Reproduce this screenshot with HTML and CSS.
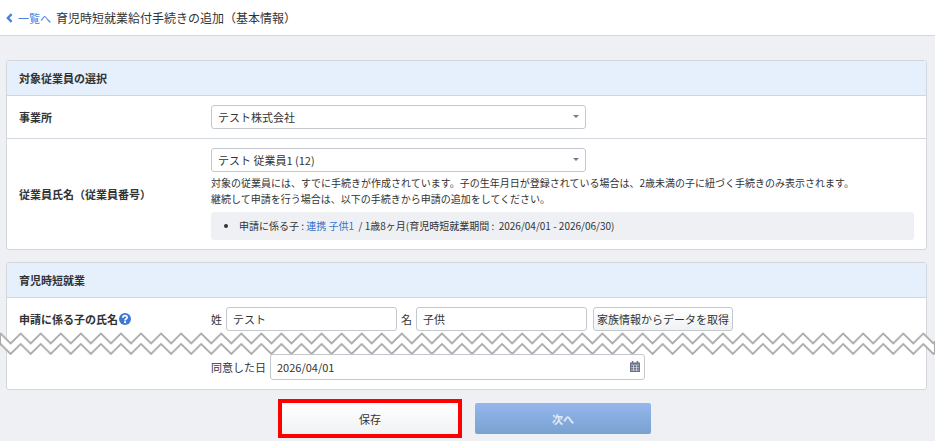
FILE: index.html
```html
<!DOCTYPE html>
<html lang="ja">
<head>
  <meta charset="UTF-8">
  <meta name="viewport" content="width=device-width, initial-scale=1">
  <title>育児時短就業給付手続きの追加（基本情報）</title>
  <link rel="stylesheet" href="styles.css">
</head>
<body>

  <header class="page-header">
    <a href="#" class="back-link">
      <svg width="7" height="10" viewBox="0 0 7 10"><path d="M5.6 1.2 L1.9 5 L5.6 8.8" fill="none" stroke="currentColor" stroke-width="2.4"/></svg>
      一覧へ
    </a>
    <h1>育児時短就業給付手続きの追加（基本情報）</h1>
  </header>

  <form class="content">
    <section class="panel">
      <h2>対象従業員の選択</h2>
      <div class="row">
        <label class="row-label" for="office">事業所</label>
        <div class="row-body">
          <div class="select">
            <select id="office"><option>テスト株式会社</option></select>
          </div>
        </div>
      </div>
      <div class="row">
        <label class="row-label" for="employee">従業員氏名（従業員番号）</label>
        <div class="row-body">
          <div class="select">
            <select id="employee"><option>テスト 従業員1 (12)</option></select>
          </div>
          <p class="help-text">対象の従業員には、すでに手続きが作成されています。子の生年月日が登録されている場合は、2歳未満の子に紐づく手続きのみ表示されます。<br>継続して申請を行う場合は、以下の手続きから申請の追加をしてください。</p>
          <ul class="procedures">
            <li>申請に係る子 : <a href="#">連携 子供1</a>&nbsp; / 1歳8ヶ月(育児時短就業期間 :&nbsp; 2026/04/01 - 2026/06/30)</li>
          </ul>
        </div>
      </div>
    </section>

    <section class="panel">
      <h2>育児時短就業</h2>
      <div class="row row-cut-bottom">
        <div class="row-label">
          申請に係る子の氏名
          <svg class="help-icon" width="12" height="12" viewBox="0 0 12 12">
            <circle cx="6" cy="6" r="6" fill="#3a78d4"/>
            <path d="M3.9 4.7 C3.9 2 8.2 2.1 8.2 4.5 C8.2 5.9 6.1 5.8 6.1 7.4" fill="none" stroke="#fff" stroke-width="1.8"/>
            <rect x="5.1" y="8.2" width="2" height="1.9" fill="#fff"/>
          </svg>
        </div>
        <div class="row-body fields">
          <label for="lastName">姓</label>
          <input type="text" id="lastName" class="name-input" value="テスト">
          <label for="firstName">名</label>
          <input type="text" id="firstName" class="name-input" value="子供">
          <button type="button" class="small-btn">家族情報からデータを取得</button>
        </div>
      </div>

      <!-- 途中の項目を省略 -->
      <div class="omission">
        <svg width="100%" height="24">
          <defs>
            <pattern id="zigzag" x="0.6" width="20.06" height="24" patternUnits="userSpaceOnUse">
              <path d="M-10.03 11.5 L0 1.5 L10.03 11.5 L20.06 1.5 L30.09 11.5 V22 L20.06 12 L10.03 22 L0 12 L-10.03 22 Z" fill="#fff" stroke="#aaa" stroke-width="1.8"/>
            </pattern>
          </defs>
          <rect width="100%" height="24" fill="url(#zigzag)"/>
          <rect width="1" y="1" height="11" fill="#aaa"/>
          <svg x="100%" overflow="visible"><rect x="-1" y="11" width="1" height="11" fill="#aaa"/></svg>
        </svg>
      </div>

      <div class="row row-cut-top">
        <div class="row-label"></div>
        <div class="row-body fields">
          <label for="agreedDate">同意した日</label>
          <div class="date-field">
            <input type="text" id="agreedDate" value="2026/04/01">
            <svg class="calendar-icon" width="10" height="11" viewBox="0 0 10 11">
              <path d="M0 1.5 H10 V11 H0 Z M1.8 0 H3.4 V2 H1.8 Z M6.6 0 H8.2 V2 H6.6 Z" fill="#6d7489"/>
              <path d="M1 4 H9 M1 6.6 H9 M1 9 H9" stroke="#fff" stroke-width="0.5"/>
              <path d="M3.5 4 V10 M6.5 4 V10" stroke="#fff" stroke-width="0.5"/>
            </svg>
          </div>
        </div>
      </div>
    </section>

    <div class="actions">
      <button type="button" class="btn btn-save">保存</button>
      <button type="button" class="btn btn-next">次へ</button>
    </div>
  </form>

</body>
</html>
```
FILE: styles.css
```css
* {
  box-sizing: border-box;
}

body {
  margin: 0;
  background-color: #eff0f4;
  color: #333;
  font-family: "Noto Sans CJK JP", sans-serif;
  font-size: 11px;
  line-height: 16px;
}

button, input, select {
  font: inherit;
  color: inherit;
}

a {
  color: #3a72c8;
  text-decoration: none;
}

.page-header {
  display: flex;
  align-items: center;
  gap: 5px;
  height: 36px;
  padding: 0 6px;
  background-color: #fff;
  border-bottom: 1px solid #d3d6dc;
}

.back-link {
  display: flex;
  align-items: center;
  gap: 5px;
  color: #4a82e4;
}

h1 {
  margin: 0;
  font-size: 12px;
  font-weight: normal;
}

.content {
  padding: 24px 8px 7px 6px;
}

.panel {
  margin-bottom: 12px;
  background-color: #fff;
  border: 1px solid #d3d6dc;
  border-radius: 3px;
}

.panel h2 {
  margin: 0;
  padding: 9px 12px;
  background-color: #e6f0fd;
  border-radius: 2px 2px 0 0;
  font-size: 11px;
}

.row {
  display: flex;
  align-items: center;
  padding: 9px 12px;
  border-top: 1px solid #d3d6dc;
}

.row-cut-bottom {
  padding-bottom: 0;
}

.row-cut-top {
  padding-top: 0;
  border-top: none;
}

.row-label {
  display: flex;
  align-items: center;
  flex: 0 0 192px;
  gap: 1px;
  font-weight: bold;
}

.row-body {
  flex: 1;
  min-width: 0;
}

.fields {
  display: flex;
  align-items: center;
  gap: 4px;
}

.select {
  position: relative;
  max-width: 375px;
}

.select::after {
  content: "";
  position: absolute;
  top: 10px;
  right: 7px;
  border: 3px solid transparent;
  border-top-color: #737a8e;
  border-bottom: none;
}

select, input {
  display: block;
  width: 100%;
  height: 24px;
  padding: 0 6px;
  background-color: #fff;
  border: 1px solid #c4c8cf;
  border-radius: 3px;
  appearance: none;
}

.name-input {
  width: 171px;
}

.help-text {
  margin: 3px 0 5px;
  font-size: 10px;
}

.procedures {
  margin: 0;
  padding: 6px 12px 6px 28px;
  background-color: #eff0f4;
  border-radius: 3px;
  font-size: 10px;
}

.small-btn {
  height: 24px;
  margin-left: 2px;
  padding: 0 3px;
  background: linear-gradient(#fff, #f1f2f5);
  border: 1px solid #c4c8cf;
  border-radius: 3px;
}

.omission {
  position: relative;
  margin: 1px -9px -2px -7px;
}

.omission > svg {
  display: block;
}

.date-field {
  position: relative;
  width: 375px;
}

.date-field input {
  height: 26px;
}

.calendar-icon {
  position: absolute;
  top: 7px;
  right: 5px;
}

.actions {
  display: flex;
  justify-content: center;
  gap: 17px;
  margin-top: 13px;
}

.btn {
  width: 176px;
  height: 31px;
  border: none;
  border-radius: 2px;
}

.btn-save {
  background: linear-gradient(#fff, #f1f2f4);
  outline: 4px solid #f00;
  border-radius: 0;
}

.btn-next {
  background: linear-gradient(#95b6ee, #78a2d0);
  color: #e3ebf6;
  font-weight: bold;
}
```
